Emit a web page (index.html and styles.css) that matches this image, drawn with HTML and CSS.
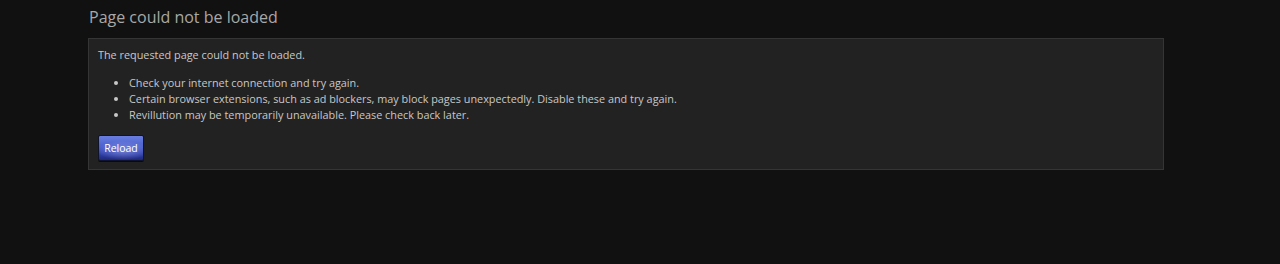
FILE: index.html
```html
<!DOCTYPE html>
<html>
<head>
<meta charset="utf-8">
<link rel="stylesheet" href="styles.css">
</head>
<body>
<div class="wrap">
  <h1 class="title">Page could not be loaded</h1>
  <div class="box">
    <p class="lead">The requested page could not be loaded.</p>
    <ul class="list">
      <li>Check your internet connection and try again.</li>
      <li>Certain browser extensions, such as ad blockers, may block pages unexpectedly. Disable these and try again.</li>
      <li>Revillution may be temporarily unavailable. Please check back later.</li>
    </ul>
    <button class="btn">Reload</button>
  </div>
</div>
</body>
</html>
```
FILE: styles.css
```css
html, body {
  margin: 0;
  padding: 0;
  background: #111111;
  height: 100%;
}
body {
  font-family: "Open Sans", "Noto Sans", sans-serif;
  color: #c8c8c8;
}
.wrap {
  margin-left: 88px;
  width: 1076px;
}
.title {
  margin: 0;
  padding: 5px 0 0 1px;
  height: 38px;
  box-sizing: border-box;
  font-size: 16px;
  font-weight: 400;
  color: #a8a8a8;
  line-height: 24px;
}
.box {
  background: #222222;
  border: 1px solid #353535;
  padding: 8px 9px 8px 9px;
  height: 132px;
  box-sizing: border-box;
}
.lead {
  margin: 0;
  font-size: 10.85px;
  line-height: 16px;
}
.list {
  margin: 12px 0 0 0;
  padding-left: 31px;
  font-size: 10.85px;
  line-height: 16px;
}
.list li { padding-left: 0; }
.btn {
  margin-top: 12px;
  width: 46px;
  height: 26px;
  padding: 0;
  border: 1px solid #10142a;
  border-radius: 2px;
  background: radial-gradient(ellipse 60% 40% at 55% 60%, rgba(160,170,240,0.55), rgba(160,170,240,0) 100%),
              linear-gradient(#6a7ee0 0%, #4a5fcc 45%, #2f3fa8 75%, #1e2878 100%);
  color: #ffffff;
  font-family: "Open Sans", "Noto Sans", sans-serif;
  font-size: 10.5px;
  line-height: 24px;
  box-shadow: 0 1px 0 #0a0a0a;
}
```
